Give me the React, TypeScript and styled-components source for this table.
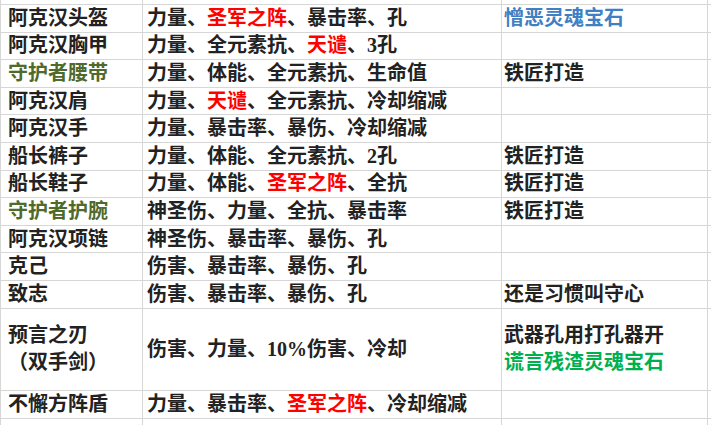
import { Fragment } from "react";
import styled, { createGlobalStyle } from "styled-components";

const GlobalStyle = createGlobalStyle`
  html, body {
    margin: 0;
    padding: 0;
    background: #fff;
  }
  body {
    width: 711px;
    height: 425px;
    overflow: hidden;
  }
`;

const RED = "#ff0000";
const OLIVE = "#4f6a2a";
const BLUE = "#3f80c4";
const GREEN = "#00b050";

type Seg = [string, string?];
type Line = Seg[];
type RowData = { name: Line[]; stats: Line[]; note: Line[]; span?: number };

const t = (s: string): Line[] => [[[s]]];

const rows: RowData[] = [
  {
    name: t("阿克汉头盔"),
    stats: [[["力量、"], ["圣军之阵", RED], ["、暴击率、孔"]]],
    note: [[["憎恶灵魂宝石", BLUE]]],
  },
  {
    name: t("阿克汉胸甲"),
    stats: [[["力量、全元素抗、"], ["天谴", RED], ["、3孔"]]],
    note: [],
  },
  {
    name: [[["守护者腰带", OLIVE]]],
    stats: t("力量、体能、全元素抗、生命值"),
    note: t("铁匠打造"),
  },
  {
    name: t("阿克汉肩"),
    stats: [[["力量、"], ["天谴", RED], ["、全元素抗、冷却缩减"]]],
    note: [],
  },
  { name: t("阿克汉手"), stats: t("力量、暴击率、暴伤、冷却缩减"), note: [] },
  { name: t("船长裤子"), stats: t("力量、体能、全元素抗、2孔"), note: t("铁匠打造") },
  {
    name: t("船长鞋子"),
    stats: [[["力量、体能、"], ["圣军之阵", RED], ["、全抗"]]],
    note: t("铁匠打造"),
  },
  {
    name: [[["守护者护腕", OLIVE]]],
    stats: t("神圣伤、力量、全抗、暴击率"),
    note: t("铁匠打造"),
  },
  { name: t("阿克汉项链"), stats: t("神圣伤、暴击率、暴伤、孔"), note: [] },
  { name: t("克己"), stats: t("伤害、暴击率、暴伤、孔"), note: [] },
  { name: t("致志"), stats: t("伤害、暴击率、暴伤、孔"), note: t("还是习惯叫守心") },
  {
    name: [[["预言之刃"]], [["（双手剑）"]]],
    stats: t("伤害、力量、10%伤害、冷却"),
    note: [[["武器孔用打孔器开"]], [["谎言残渣灵魂宝石", GREEN]]],
    span: 3,
  },
  {
    name: t("不懈方阵盾"),
    stats: [[["力量、暴击率、"], ["圣军之阵", RED], ["、冷却缩减"]]],
    note: [],
  },
  { name: [], stats: [], note: [] },
];

// spreadsheet grid: 1px gaps show the grey background as cell borders
const Sheet = styled.div`
  display: grid;
  grid-template-columns: 141px 358px 205px 1fr;
  grid-template-rows: 4px;
  grid-auto-rows: 26.6px;
  gap: 1px;
  padding-left: 1px;
  width: 711px;
  height: 425px;
  box-sizing: border-box;
  overflow: hidden;
  background: #d6d6d6;
  font-family: "Liberation Serif", "Noto Sans CJK SC", serif;
  font-weight: 700;
  font-size: 20px;
  color: #222;
`;

const Cell = styled.div<{ $pad: number; $span?: number }>`
  background: #fff;
  display: flex;
  flex-direction: column;
  justify-content: center;
  padding-left: ${(p) => p.$pad}px;
  grid-row: span ${(p) => p.$span ?? 1};
  line-height: 27px;
  white-space: nowrap;
  overflow: hidden;
`;

const Text = styled.span<{ $color?: string }>`
  color: ${(p) => p.$color ?? "inherit"};
`;

const Lines = ({ lines }: { lines: Line[] }) => (
  <>
    {lines.map((line, i) => (
      <div key={i}>
        {line.map(([s, c], j) => (
          <Text key={j} $color={c}>
            {s}
          </Text>
        ))}
      </div>
    ))}
  </>
);

const PADS = [7, 4, 2, 0];

export default function App() {
  return (
    <>
      <GlobalStyle />
      <Sheet>
        {PADS.map((p, i) => (
          <Cell key={`top-${i}`} $pad={p} />
        ))}
        {rows.map((r, i) => (
          <Fragment key={i}>
            <Cell $pad={PADS[0]} $span={r.span}>
              <Lines lines={r.name} />
            </Cell>
            <Cell $pad={PADS[1]} $span={r.span}>
              <Lines lines={r.stats} />
            </Cell>
            <Cell $pad={PADS[2]} $span={r.span}>
              <Lines lines={r.note} />
            </Cell>
            <Cell $pad={PADS[3]} $span={r.span} />
          </Fragment>
        ))}
      </Sheet>
    </>
  );
}
